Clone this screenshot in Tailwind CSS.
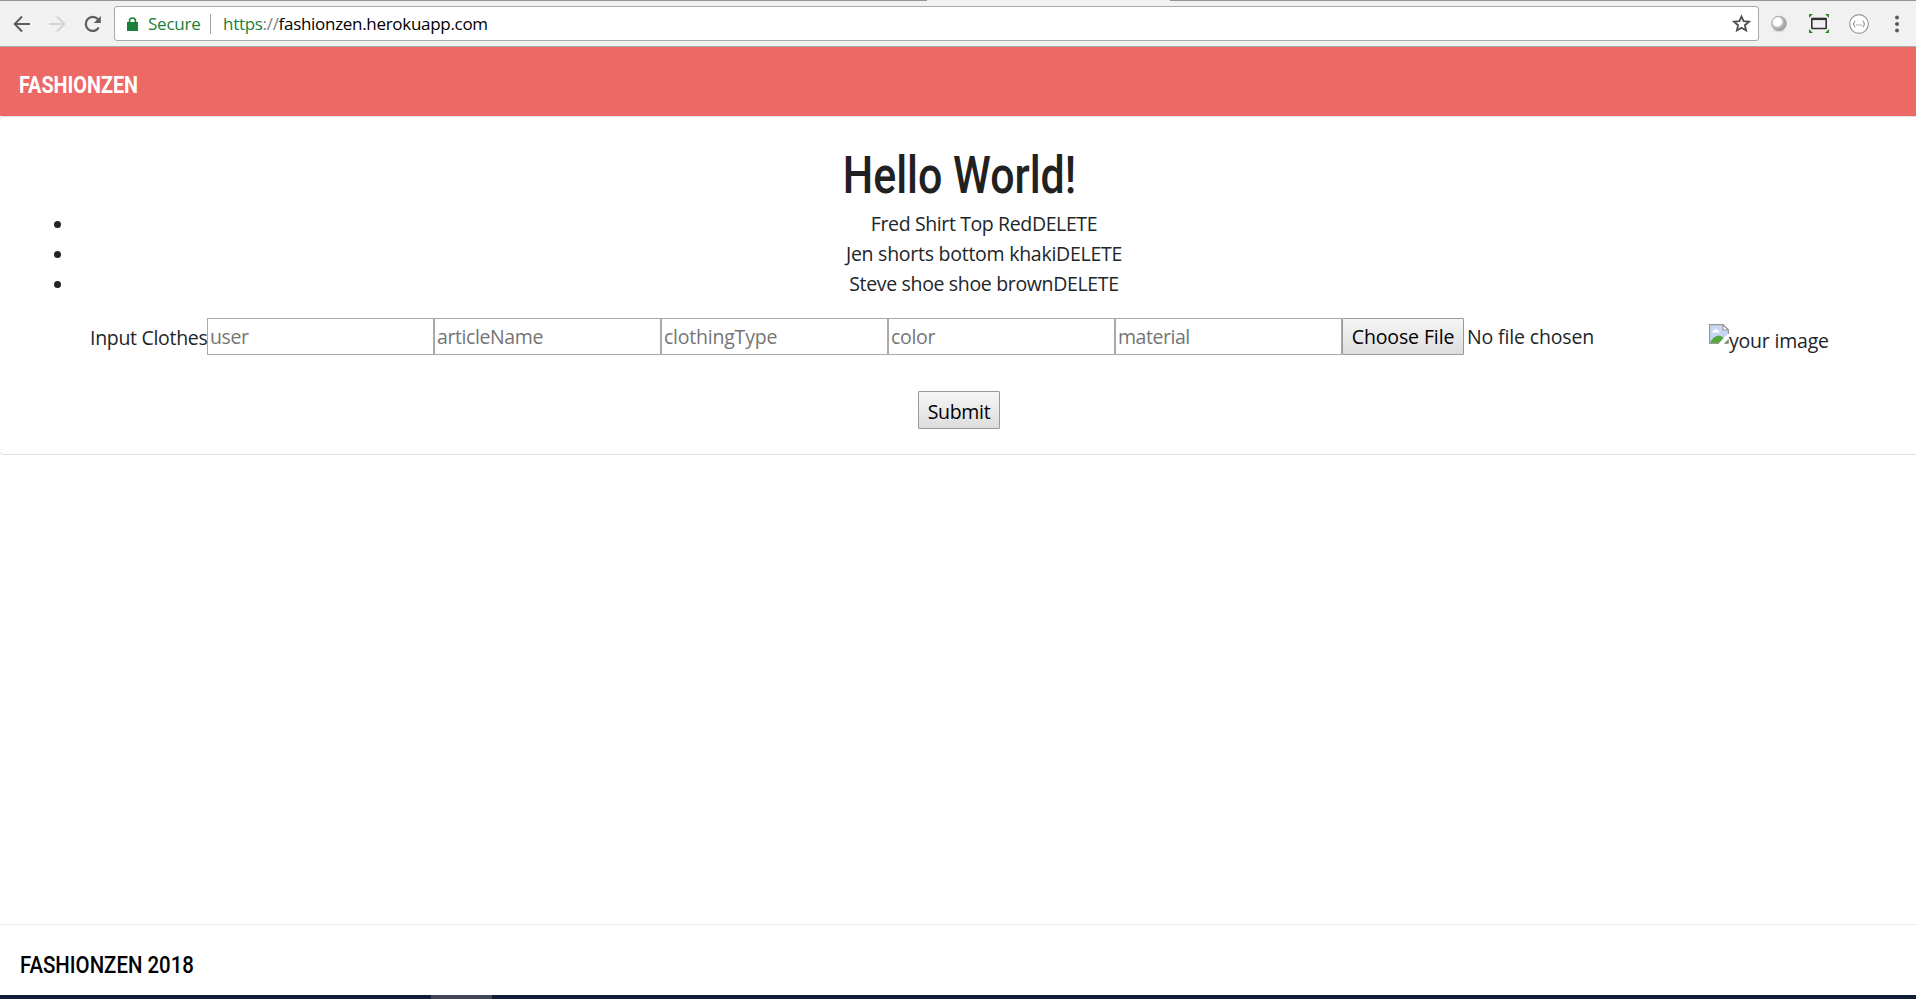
<!DOCTYPE html>
<html lang="en">
<head>
<meta charset="utf-8">
<title>FashionZen</title>
<script src="https://cdn.jsdelivr.net/npm/@tailwindcss/browser@4"></script>
</head>
<body class="flex h-[999px] w-[1916px] flex-col overflow-hidden bg-white font-['Open_Sans',sans-serif] text-[19.5px] leading-[30px] text-[#212529]">
<header class="flex h-[47px] shrink-0 flex-col border-b border-[#a9a9a9] bg-[#f1f1f1]">
  <div class="flex h-px shrink-0 justify-between"><i class="w-[927px] bg-[#949494]"></i><i class="w-[746px] bg-[#949494]"></i></div>
  <div class="flex h-[45px] items-center">
    <svg class="ml-[13px] h-5 w-[18px]" viewBox="0 0 18 20" fill="none" stroke="#5a5d62" stroke-width="2"><path d="M17 10H2M9 2.5L1.700 10L9 17.500"/></svg>
    <svg class="ml-[17px] h-5 w-[18px]" viewBox="0 0 18 20" fill="none" stroke="#d3d4d6" stroke-width="2"><path d="M1 10H16M9 2.500L16.300 10L9 17.500"/></svg>
    <svg class="ml-[17px] h-5 w-5" viewBox="0 0 20 20"><path d="M15.800 13.500A7 7 0 1 1 15 5.300" fill="none" stroke="#5a5d62" stroke-width="2.200"/><path d="M17.800 2v7h-7z" fill="#5a5d62"/></svg>
    <div class="ml-[11px] flex h-[35px] w-[1645px] items-center rounded-[3px] border border-[#a9a9a9] bg-white text-[17px]">
      <svg class="ml-3 h-[14px] w-[11px]" viewBox="0 0 11 14"><path d="M0 5h11v9H0z" fill="#188038"/><path d="M2.500 6V4a3 3 0 0 1 6 0v2" fill="none" stroke="#188038" stroke-width="1.600"/></svg>
      <span class="ml-[10px] w-[52px] tracking-[-0.23px] whitespace-nowrap text-[#188038]">Secure</span>
      <i class="ml-[10px] h-5 w-px bg-[#a0a0a0]"></i>
      <span class="ml-[12px] tracking-[-0.3px] whitespace-nowrap text-black"><span class="text-[#188038]">https</span><span class="text-[#808080]">://</span>fashionzen.herokuapp.com</span>
      <svg class="mr-[7px] ml-auto h-[19px] w-[19px]" viewBox="0 0 19 19" fill="none" stroke="#4b4d50" stroke-width="1.800"><path d="M9.500 2.500L11.600 7.200L17 7.700L12.900 11.200L14.100 16.500L9.500 13.700L4.900 16.500L6.100 11.200L2 7.700L7.400 7.200Z"/></svg>
    </div>
    <svg class="ml-3 h-[18px] w-4" viewBox="0 0 16 18"><defs><radialGradient id="g" cx=".38" cy=".38" r=".62"><stop offset=".45" stop-color="#fff"/><stop offset=".65" stop-color="#bbb"/><stop offset="1" stop-color="#999"/></radialGradient></defs><ellipse cx="8" cy="16" rx="6" ry="1.500" fill="#e3e3e3"/><circle cx="8" cy="8.500" r="7.300" fill="url(#g)" stroke="#a5a5a5"/></svg>
    <svg class="ml-[22px] h-[19px] w-5" viewBox="0 0 20 19"><path d="M0 0h4L0 4zM20 0v4l-4-4zM0 19v-4l4 4zM20 19h-4l4-4z" fill="#2f8a26"/><rect x="2.800" y="4.500" width="14.400" height="10" rx=".5" fill="#efeff4" stroke="#333" stroke-width="1.600"/><path d="M2.500 5h15" stroke="#333" stroke-width="2.200"/></svg>
    <svg class="ml-5 h-5 w-5" viewBox="0 0 20 20"><circle cx="10" cy="10" r="9.300" fill="#fff" stroke="#999" stroke-width="1.200"/><path d="M6.300 7Q5.200 7 5.200 8.500Q5.200 10 4.200 10Q5.200 10 5.200 11.500Q5.200 13 6.300 13M13.700 7Q14.800 7 14.800 8.500Q14.800 10 15.800 10Q14.800 10 14.800 11.500Q14.800 13 13.700 13" fill="none" stroke="#777"/><path d="M7.300 11h1.200M9.400 11h1.200M11.500 11h1.200" stroke="#777" stroke-width="1.200"/></svg>
    <svg class="ml-[26px] h-[18px] w-[4px]" viewBox="0 0 4 18" fill="#5a5d62"><circle cx="2" cy="2.500" r="2"/><circle cx="2" cy="9" r="2"/><circle cx="2" cy="15.500" r="2"/></svg>
  </div>
</header>
<nav class="flex h-[69px] shrink-0 items-center bg-[#ec6965] pl-[19px] font-['Roboto',sans-serif] text-[24px] font-bold text-white"><span class="mt-[6px] inline-block origin-left scale-x-[0.825] whitespace-nowrap">FASHIONZEN</span></nav>
<main class="-ml-px flex h-[339px] shrink-0 flex-col rounded-l-[5px] border border-r-0 border-[#dfdfdf]">
  <div class="mt-[26px] flex h-[60px] items-center justify-center pt-[5px] pl-[2px] font-['Roboto',sans-serif] text-[52px] leading-[60px] font-medium text-[#212121]"><h1 class="inline-block scale-x-[0.825] whitespace-nowrap">Hello World!</h1></div>
  <ul class="mt-[6px] flex flex-col pr-[9px]">
    <li class="flex h-[30px] items-center"><i class="ml-[54px] h-[7px] w-[7px] rounded-full bg-[#212529]"></i><span class="mx-auto tracking-[-0.38px] whitespace-nowrap">Fred Shirt Top RedDELETE</span></li>
    <li class="flex h-[30px] items-center"><i class="ml-[54px] h-[7px] w-[7px] rounded-full bg-[#212529]"></i><span class="mx-auto tracking-[-0.26px] whitespace-nowrap">Jen shorts bottom khakiDELETE</span></li>
    <li class="flex h-[30px] items-center"><i class="ml-[54px] h-[7px] w-[7px] rounded-full bg-[#212529]"></i><span class="mx-auto tracking-[-0.34px] whitespace-nowrap">Steve shoe shoe brownDELETE</span></li>
  </ul>
  <form class="flex flex-col">
    <div class="mt-[19px] flex h-[37px] items-center pl-[90px]">
      <label class="w-[117px] pt-[2px] tracking-[-0.3px] whitespace-nowrap">Input Clothes</label>
      <span class="flex h-[37px] w-[227px] items-center border border-[#a9a9a9] pt-px pl-[2px] tracking-[-0.4px] text-[#757575]">user</span>
      <span class="flex h-[37px] w-[227px] items-center border border-[#a9a9a9] pt-px pl-[2px] tracking-[-0.4px] text-[#757575]">articleName</span>
      <span class="flex h-[37px] w-[227px] items-center border border-[#a9a9a9] pt-px pl-[2px] tracking-[-0.22px] text-[#757575]">clothingType</span>
      <span class="flex h-[37px] w-[227px] items-center border border-[#a9a9a9] pt-px pl-[2px] tracking-[-0.3px] text-[#757575]">color</span>
      <span class="flex h-[37px] w-[227px] items-center border border-[#a9a9a9] pt-px pl-[2px] tracking-[-0.45px] text-[#757575]">material</span>
      <span class="flex h-[37px] w-[122px] items-center justify-center rounded-[1px] border border-[#999] bg-linear-to-b from-[#f6f6f6] to-[#dddddd] pt-px tracking-[-0.12px] whitespace-nowrap text-black">Choose File</span>
      <span class="ml-[3px] w-[242px] pt-px tracking-[-0.15px] whitespace-nowrap">No file chosen</span>
      <svg class="-mt-[5px] h-5 w-5 shrink-0" viewBox="0 0 20 20"><path d="M.6.600H14L19.400 6V9.500L9.500 19.400H.6z" fill="#c6d7f5"/><path d="M3 8.500Q3 6.500 5 6.500Q6 3.500 8 5.500Q10.500 6.500 10.500 8.500z" fill="#fff"/><path d="M1 18.900Q4.500 12 9.500 11.500Q13 11.500 14.500 14L10 18.900z" fill="#55a83c"/><path d="M10 19.400H.6V.6H14L19.400 6V10" fill="none" stroke="#999" stroke-width="1.200"/><path d="M14 .6V6h5.400z" fill="#fff" stroke="#999" stroke-width="1.200"/><path d="M20 9.500L10 20h4.500L20 14.500z" fill="#fff"/><path d="M19.400 15.500V19.400h-4z" fill="#55a83c" stroke="#999"/></svg>
      <span class="mt-[9px] tracking-[-0.2px] whitespace-nowrap">your image</span>
    </div>
    <div class="mt-[36px] ml-[918px] flex h-[38px] w-[82px] items-center justify-center rounded-[1px] border border-[#999] bg-linear-to-b from-[#f6f6f6] to-[#dddddd] pt-[3px] tracking-[-0.3px] text-black">Submit</div>
  </form>
</main>
<div class="flex-1"></div>
<footer class="flex h-[71px] shrink-0 items-center border-t border-[#ececec] pl-5 font-['Roboto',sans-serif] text-[24px] font-medium text-black"><span class="mt-[9px] inline-block origin-left scale-x-[0.85] whitespace-nowrap">FASHIONZEN 2018</span></footer>
<div class="flex h-1 shrink-0 bg-[#111c35]"><i class="ml-[431px] w-[61px] bg-[#414659]"></i></div>
</body>
</html>
